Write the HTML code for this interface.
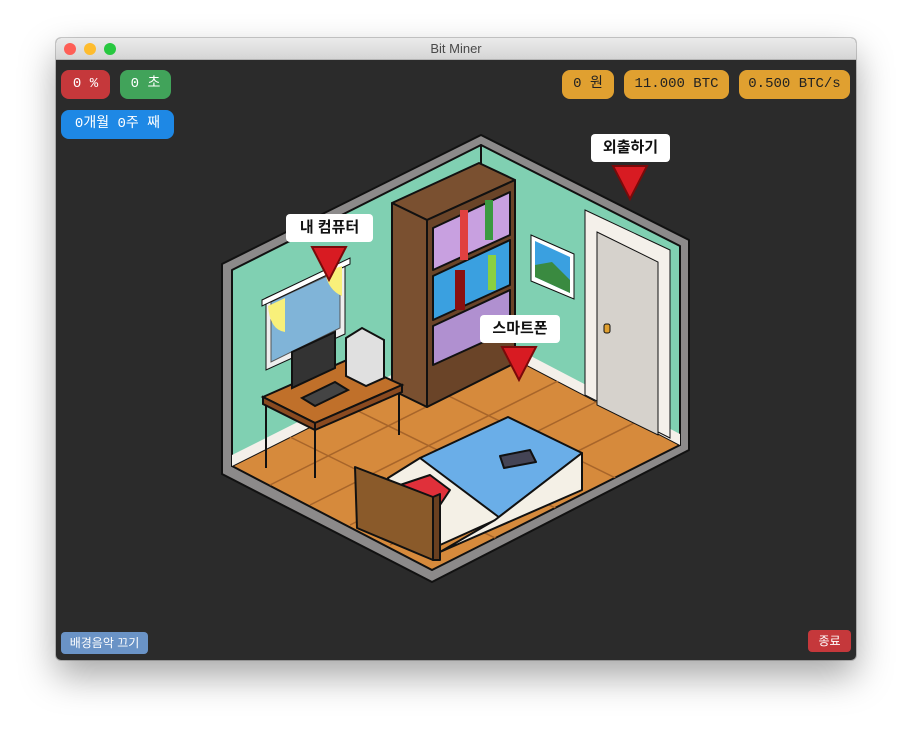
<!DOCTYPE html>
<html><head><meta charset="utf-8"><style>
*{margin:0;padding:0;box-sizing:border-box}
body{width:912px;height:734px;background:#fff;position:relative;overflow:hidden;font-family:"Liberation Mono","Noto Sans CJK KR",monospace}
.win{position:absolute;left:56px;top:38px;width:800px;height:622px;border-radius:5px;overflow:hidden;box-shadow:0 16px 36px rgba(0,0,0,.35),0 0 0 1px rgba(0,0,0,.2);background:#2b2b2b}
.tb{height:22px;background:linear-gradient(#ebebeb,#d5d5d5);border-bottom:1px solid #b4b4b4;text-align:center;font:13px "Liberation Sans",sans-serif;color:#4a4a4a;line-height:22px;position:relative}
.dot{position:absolute;top:5px;width:12px;height:12px;border-radius:50%}
.pill{position:absolute;height:29px;border-radius:8px;color:#fff;font-size:14px;line-height:29px;text-align:center}
.or{background:#e0a030;color:#222}
.lbl{position:absolute;background:#fff;border-radius:4px;font:bold 15px "Liberation Sans","Noto Sans CJK KR",sans-serif;color:#111;text-align:center;line-height:28px;height:28px}
.btn{position:absolute;height:22px;border-radius:4px;color:#fff;font:12px "Liberation Sans","Noto Sans CJK KR",sans-serif;line-height:22px;text-align:center}
</style></head><body>
<div class="win">
<div class="tb"><div class="dot" style="left:8px;background:#fe5f57"></div><div class="dot" style="left:28px;background:#febc2e"></div><div class="dot" style="left:48px;background:#28c840"></div>Bit Miner</div>
</div>
<div class="pill" style="left:61px;top:70px;width:49px;background:#c5383b">0 %</div>
<div class="pill" style="left:120px;top:70px;width:51px;background:#41a35a">0 초</div>
<div class="pill" style="left:61px;top:110px;width:113px;background:#1e88e5">0개월 0주 째</div>
<div class="pill or" style="left:562px;top:70px;width:52px">0 원</div>
<div class="pill or" style="left:624px;top:70px;width:105px">11.000 BTC</div>
<div class="pill or" style="left:739px;top:70px;width:111px">0.500 BTC/s</div>
<svg style="position:absolute;left:0;top:0" width="912" height="734">
<defs><clipPath id="fl"><polygon points="232,466 481,341 680,445 432,570"/></clipPath></defs>
<g stroke="#111" stroke-width="2" stroke-linejoin="round">
<polygon points="222,264 481,135 689,240 689,450 432,582 222,474" fill="#8c8a8a"/>
<polygon points="232,270 481,145 481,341 232,466" fill="#80d0b2"/>
<polygon points="481,145 680,246 680,445 481,341" fill="#80d0b2"/>
<polygon points="232,466 481,341 680,445 432,570" fill="#d68a3c"/>
</g>
<g stroke="#a8652a" stroke-width="1.5" clip-path="url(#fl)">
<line x1="270" y1="485" x2="520" y2="360"/><line x1="310" y1="505" x2="560" y2="380"/><line x1="350" y1="525" x2="600" y2="400"/><line x1="390" y1="545" x2="640" y2="420"/>
<line x1="290" y1="437" x2="560" y2="570"/><line x1="350" y1="407" x2="600" y2="530"/><line x1="410" y1="377" x2="640" y2="490"/>
</g>
<polygon points="232,455 481,330 481,341 232,466" fill="#f4f0ea"/>
<polygon points="481,330 680,434 680,445 481,341" fill="#f4f0ea"/>
<polygon points="266,298 345,262 345,334 266,370" fill="#eee" stroke="#111"/>
<polygon points="271,302 340,270 340,328 271,362" fill="#80b4d8" stroke="#555"/>
<polygon points="262,300 350,258 350,264 262,306" fill="#fff" stroke="#111"/>
<path d="M268,306 Q270,330 285,332 L285,298Z" fill="#f8f07a"/>
<path d="M325,272 Q328,290 342,296 L342,266Z" fill="#f8f07a"/>
<polygon points="531,235 574,254 574,299 531,281" fill="#fff" stroke="#111"/>
<polygon points="535,241 570,257 570,293 535,277" fill="#3aa0e0"/>
<polygon points="535,265 552,262 570,280 570,293 535,277" fill="#3a8a40"/>
<polygon points="585,210 670,250 670,438 585,395" fill="#f4f0ea" stroke="#111"/>
<polygon points="597,232 658,262 658,435 597,405" fill="#d6d2cc" stroke="#111"/>
<rect x="604" y="324" width="6" height="9" rx="2" fill="#e0a030" stroke="#111"/>
<g stroke="#111" stroke-width="2" stroke-linejoin="round">
<polygon points="392,203 479,163 515,180 427,220" fill="#7a5030"/>
<polygon points="392,203 427,220 427,407 392,390" fill="#7a5030"/>
<polygon points="427,220 515,180 515,363 427,407" fill="#6a4428"/>
<polygon points="433,228 510,192 510,235 433,270" fill="#c8a0e0"/>
<polygon points="433,276 510,240 510,285 433,320" fill="#3aa0e0"/>
<polygon points="433,326 510,290 510,330 433,365" fill="#b090d0"/>
</g>
<rect x="460" y="210" width="8" height="50" fill="#e04040"/><rect x="485" y="200" width="8" height="40" fill="#3a9a40"/>
<rect x="455" y="270" width="10" height="40" fill="#8a1010"/><rect x="488" y="255" width="8" height="35" fill="#8ad040"/>
<g stroke="#111" stroke-width="2">
<line x1="266" y1="404" x2="266" y2="468"/><line x1="315" y1="428" x2="315" y2="478"/><line x1="399" y1="388" x2="399" y2="435"/>
<polygon points="263,397 347,360 402,385 315,423" fill="#c0702a"/>
<polygon points="263,397 315,423 315,430 263,404" fill="#8a4a20"/>
<polygon points="315,423 402,385 402,392 315,430" fill="#8a4a20"/>
<polygon points="292,352 335,332 335,368 292,388" fill="#333"/>
<polygon points="346,338 362,328 384,340 384,378 366,386 346,376" fill="#e0e0e0"/>
<polygon points="302,398 335,382 348,390 315,406" fill="#444"/>
</g>
<g stroke="#111" stroke-width="2" stroke-linejoin="round">
<polygon points="420,458 508,417 582,453 495,520" fill="#6aaee8"/>
<polygon points="388,478 420,458 500,518 440,545 400,520" fill="#f4f0e6"/>
<polygon points="495,520 582,453 582,490 440,552" fill="#f4f0e6"/>
<polygon points="400,485 430,475 450,490 440,505" fill="#e0303a"/>
<polygon points="500,456 530,450 536,462 504,468" fill="#445" />
<polygon points="355,467 433,497 433,560 357,528" fill="#8a5a2a"/>
<polygon points="433,497 440,494 440,560 433,560" fill="#6a4020"/>
</g>
<g fill="#d81b22" stroke="#7a0a0a" stroke-width="2">
<polygon points="312,247 346,247 329,280"/>
<polygon points="613,166 647,166 630,199"/>
<polygon points="502,347 536,347 519,380"/>
</g>
</svg>
<div class="lbl" style="left:286px;top:214px;width:87px">내 컴퓨터</div>
<div class="lbl" style="left:591px;top:134px;width:79px">외출하기</div>
<div class="lbl" style="left:480px;top:315px;width:80px">스마트폰</div>
<div class="btn" style="left:61px;top:632px;width:87px;background:#6a93c6">배경음악 끄기</div>
<div class="btn" style="left:808px;top:630px;width:43px;background:#c5383b">종료</div>
</body></html>
